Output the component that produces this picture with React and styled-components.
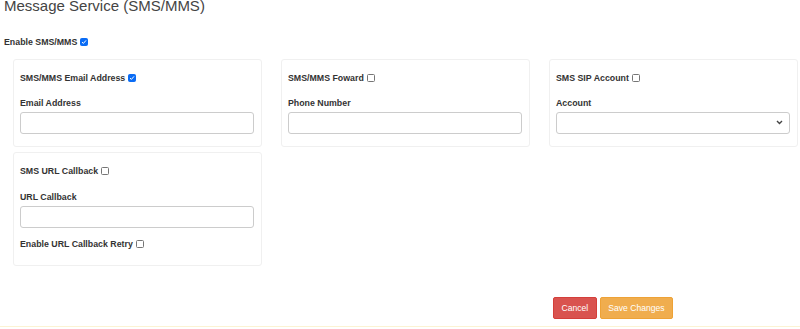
import React from "react";
import styled, { createGlobalStyle } from "styled-components";

const GlobalStyle = createGlobalStyle`
  html, body {
    margin: 0;
    padding: 0;
    background: #fff;
    font-family: "Liberation Sans", Arial, sans-serif;
    color: #333;
  }
`;

const Page = styled.div`
  width: 800px;
  height: 329px;
  overflow: hidden;
  display: flex;
  flex-direction: column;
`;

const Title = styled.h3`
  margin: -2px 0 0 4px;
  font-size: 15px;
  line-height: 15px;
  font-weight: normal;
  color: #444;
`;

const Label = styled.label`
  display: block;
  font-size: 8.8px;
  line-height: 12px;
  font-weight: bold;
  color: #333;
`;

const EnableLabel = styled(Label)`
  margin: 23px 0 0 4px;
`;

const Box = styled.span`
  display: inline-block;
  box-sizing: border-box;
  width: 8px;
  height: 8px;
  margin-left: 3px;
  vertical-align: -1px;
  border: 1px solid ${(p) => (p.$checked ? "#0a6cf5" : "#767676")};
  border-radius: 1.5px;
  background: ${(p) => (p.$checked ? "#0a6cf5" : "#fff")};
  position: relative;
`;

const Tick = styled.svg`
  position: absolute;
  left: 0;
  top: 0;
  width: 6px;
  height: 6px;
`;

function Checkbox({ checked }) {
  return (
    <Box $checked={checked}>
      {checked && (
        <Tick viewBox="0 0 6 6">
          <path d="M1 3.1l1.4 1.3L5 1.4" fill="none" stroke="#fff" strokeWidth="1" />
        </Tick>
      )}
    </Box>
  );
}

const Grid = styled.div`
  display: grid;
  grid-template-columns: repeat(3, 1fr);
  column-gap: 19px;
  row-gap: 5px;
  padding: 0 2px 0 13px;
  margin-top: 11px;
  align-items: start;
`;

const Card = styled.div`
  border: 1px solid #f0f0f0;
  border-radius: 3px;
  padding: 12px 7px 12px 6px;
`;

const FieldLabel = styled(Label)`
  margin-top: ${(p) => p.$gap || 0}px;
  margin-bottom: 3px;
`;

const TextInput = styled.input`
  display: block;
  box-sizing: border-box;
  width: 100%;
  height: 22px;
  border: 1px solid #ccc;
  border-radius: 3px;
  font-size: 9px;
  padding: 0 6px;
  background: #fff;
`;

const SelectWrap = styled.div`
  position: relative;
`;

const Select = styled.select`
  display: block;
  box-sizing: border-box;
  width: 100%;
  height: 22px;
  border: 1px solid #ccc;
  border-radius: 3px;
  font-size: 9px;
  padding: 0 6px;
  background: #fff;
  appearance: none;
`;

const Chevron = styled.svg`
  position: absolute;
  right: 7px;
  top: 8px;
  width: 7px;
  height: 5px;
  pointer-events: none;
`;

const Actions = styled.div`
  display: flex;
  gap: 3px;
  margin: 31px 0 0 553px;
`;

const Button = styled.button`
  height: 22px;
  padding: 0 7.5px;
  border: 1px solid ${(p) => p.$border};
  border-radius: 2px;
  background: ${(p) => p.$bg};
  color: #fff;
  font-family: "Liberation Sans", Arial, sans-serif;
  font-size: 8.6px;
`;

const WarnStrip = styled.div`
  margin-top: 7px;
  height: 1px;
  background: #fcf3d3;
`;

function App() {
  return (
    <Page>
      <GlobalStyle />
      <Title>Message Service (SMS/MMS)</Title>
      <EnableLabel>
        Enable SMS/MMS
        <Checkbox checked />
      </EnableLabel>
      <Grid>
        <Card>
          <Label>
            SMS/MMS Email Address
            <Checkbox checked />
          </Label>
          <FieldLabel $gap={13}>Email Address</FieldLabel>
          <TextInput />
        </Card>
        <Card>
          <Label>
            SMS/MMS Foward
            <Checkbox />
          </Label>
          <FieldLabel $gap={13}>Phone Number</FieldLabel>
          <TextInput />
        </Card>
        <Card>
          <Label>
            SMS SIP Account
            <Checkbox />
          </Label>
          <FieldLabel $gap={13}>Account</FieldLabel>
          <SelectWrap>
            <Select defaultValue="">
              <option value=""></option>
            </Select>
            <Chevron viewBox="0 0 7 5">
              <path d="M1 1l2.5 2.5L6 1" fill="none" stroke="#444" strokeWidth="1.4" />
            </Chevron>
          </SelectWrap>
        </Card>
        <Card>
          <Label>
            SMS URL Callback
            <Checkbox />
          </Label>
          <FieldLabel $gap={14}>URL Callback</FieldLabel>
          <TextInput />
          <FieldLabel $gap={10}>
            Enable URL Callback Retry
            <Checkbox />
          </FieldLabel>
        </Card>
      </Grid>
      <Actions>
        <Button $bg="#d9534f" $border="#d43f3a">Cancel</Button>
        <Button $bg="#f0ad4e" $border="#eea236">Save Changes</Button>
      </Actions>
      <WarnStrip />
    </Page>
  );
}

export default App;
